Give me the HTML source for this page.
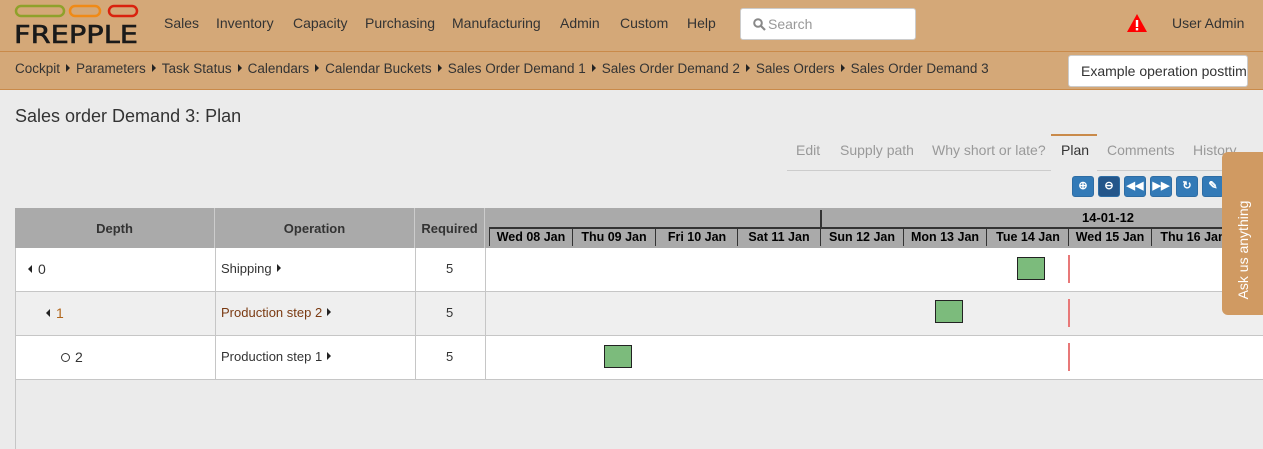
<!DOCTYPE html>
<html><head><meta charset="utf-8"><style>
*{box-sizing:border-box;margin:0;padding:0}
body{width:1263px;height:449px;overflow:hidden;background:#ebebeb;font-family:"Liberation Sans",sans-serif;color:#333;position:relative;font-size:14px}
.a{position:absolute;white-space:nowrap}
#nav{left:0;top:0;width:1263px;height:52px;background:#d4a878;border-bottom:1px solid #c98a4a}
#bc{left:0;top:52px;width:1263px;height:38px;background:#d4a878;border-bottom:1px solid #c98a4a}
.nl{top:15px;font-size:14px;color:#333}
.tri{display:inline-block;width:0;height:0;border-top:4px solid transparent;border-bottom:4px solid transparent;border-left:4px solid #222;margin:0 6px 0 6px;vertical-align:1px}
.tril{display:inline-block;width:0;height:0;border-top:4px solid transparent;border-bottom:4px solid transparent;border-right:4px solid #222;margin-right:6px;vertical-align:1px}
.tab{top:142px;font-size:14px;color:#999}
.btn{top:176px;width:22px;height:21px;background:#337ab7;border-radius:3px;border:1px solid #2e6da4;color:#fff;font-size:11px;text-align:center;line-height:19px;font-weight:bold}
.hd{top:208px;height:40px;background:#aaa;border-right:1px solid #ccc;font-weight:bold;font-size:13px;text-align:center;line-height:42px;color:#333}
.row{left:15px;width:1248px;height:44px;border-bottom:1px solid #c6c6c6}
.day{top:228px;height:18px;border-left:1.5px solid #333;font-weight:bold;font-size:12.5px;color:#000;line-height:18px;text-align:center;width:83px}
.bar{width:28px;height:23px;background:#7cbb7c;border:1px solid #222}
.red{left:1068px;width:2px;height:28px;background:#e87878}
</style></head><body>
<div class="a" id="nav"></div>
<div class="a" id="bc"></div>
<svg class="a" style="left:14px;top:4px" width="126" height="42">
<rect x="2" y="2" width="48" height="10" rx="5" fill="none" stroke="#8fa12b" stroke-width="2.5"/>
<rect x="56" y="2" width="30" height="10" rx="5" fill="none" stroke="#f08a16" stroke-width="2.5"/>
<rect x="95" y="2" width="28" height="10" rx="5" fill="none" stroke="#d9220e" stroke-width="2.5"/>
<text x="0" y="39" font-family="DejaVu Sans" font-size="25" fill="#1a1a1a" textLength="124" lengthAdjust="spacingAndGlyphs" stroke="#1a1a1a" stroke-width="0.6">FREPPLE</text>
</svg>
<div class="a nl" style="left:164px">Sales</div>
<div class="a nl" style="left:216px">Inventory</div>
<div class="a nl" style="left:293px">Capacity</div>
<div class="a nl" style="left:365px">Purchasing</div>
<div class="a nl" style="left:452px">Manufacturing</div>
<div class="a nl" style="left:560px">Admin</div>
<div class="a nl" style="left:620px">Custom</div>
<div class="a nl" style="left:687px">Help</div>
<div class="a" style="left:740px;top:8px;width:176px;height:32px;background:#fff;border:1px solid #ccc;border-radius:3px;color:#999;font-size:14px;line-height:30px;padding-left:27px">Search
<svg class="a" style="left:12px;top:9px" width="13" height="13"><circle cx="5" cy="5" r="3.8" fill="none" stroke="#888" stroke-width="2"/><line x1="8" y1="8" x2="12" y2="12" stroke="#888" stroke-width="2.2"/></svg></div>
<svg class="a" style="left:1126px;top:13px" width="22" height="20"><path d="M11 1 L21 19 L1 19 Z" fill="#f00"/><rect x="9.8" y="7" width="2.4" height="7" fill="#fff"/><rect x="9.8" y="15" width="2.4" height="2.4" fill="#fff"/></svg>
<div class="a nl" style="left:1172px">User Admin</div>
<div class="a" style="left:15px;top:61px;font-size:13.5px">Cockpit<span class="tri"></span>Parameters<span class="tri"></span>Task Status<span class="tri"></span>Calendars<span class="tri"></span>Calendar Buckets<span class="tri"></span>Sales Order Demand 1<span class="tri"></span>Sales Order Demand 2<span class="tri"></span>Sales Orders<span class="tri"></span>Sales Order Demand 3</div>
<div class="a" style="left:1068px;top:55px;width:180px;height:32px;background:#fff;border:1px solid #ccc;border-radius:3px;overflow:hidden;font-size:14px;line-height:30px;padding-left:12px">Example operation posttime</div>
<div class="a" style="left:15px;top:106px;font-size:18px;color:#333">Sales order Demand 3: Plan</div>
<div class="a" style="left:787px;top:170px;width:450px;height:1px;background:#ccc"></div>
<div class="a tab" style="left:796px">Edit</div>
<div class="a tab" style="left:840px">Supply path</div>
<div class="a tab" style="left:932px">Why short or late?</div>
<div class="a" style="left:1051px;top:134px;width:46px;height:37px;border-top:2px solid #c98a4a;background:#ebebeb"></div>
<div class="a tab" style="left:1061px;color:#333">Plan</div>
<div class="a tab" style="left:1107px">Comments</div>
<div class="a tab" style="left:1193px">History</div>
<div class="a btn" style="left:1072px">⊕</div>
<div class="a btn" style="left:1098px;background:#24568a">⊖</div>
<div class="a btn" style="left:1124px">◀◀</div>
<div class="a btn" style="left:1150px">▶▶</div>
<div class="a btn" style="left:1176px">↻</div>
<div class="a btn" style="left:1202px">✎</div>
<div class="a" style="left:15px;top:208px;width:1248px;height:241px;background:#ebebeb;border-left:1px solid #c6c6c6"></div>
<div class="a hd" style="left:15px;width:200px">Depth</div>
<div class="a hd" style="left:215px;width:200px">Operation</div>
<div class="a hd" style="left:415px;width:70px">Required</div>
<div class="a hd" style="left:485px;width:778px"></div>
<div class="a" style="left:820px;top:210px;width:1.5px;height:18px;background:#333"></div>
<div class="a" style="left:1082px;top:210px;font-weight:bold;font-size:13px;color:#000">14-01-12</div>
<div class="a" style="left:489px;top:227px;width:774px;height:1.5px;background:#333"></div>
<div class="a day" style="left:489px">Wed 08 Jan</div>
<div class="a day" style="left:572px">Thu 09 Jan</div>
<div class="a day" style="left:655px">Fri 10 Jan</div>
<div class="a day" style="left:737px">Sat 11 Jan</div>
<div class="a day" style="left:820px">Sun 12 Jan</div>
<div class="a day" style="left:903px">Mon 13 Jan</div>
<div class="a day" style="left:986px">Tue 14 Jan</div>
<div class="a day" style="left:1068px">Wed 15 Jan</div>
<div class="a day" style="left:1151px">Thu 16 Jan</div>
<div class="a day" style="left:1234px"></div>
<div class="a row" style="top:248px;background:#fff;border-left:1px solid #c6c6c6"></div>
<div class="a row" style="top:292px;background:#efefef;border-left:1px solid #c6c6c6"></div>
<div class="a row" style="top:336px;background:#fff;border-left:1px solid #c6c6c6"></div>
<div class="a" style="left:215px;top:248px;width:1px;height:132px;background:#c6c6c6"></div>
<div class="a" style="left:415px;top:248px;width:1px;height:132px;background:#c6c6c6"></div>
<div class="a" style="left:485px;top:248px;width:1px;height:132px;background:#c6c6c6"></div>
<div class="a" style="left:28px;top:261px;font-size:14px"><span class="tril"></span>0</div>
<div class="a" style="left:46px;top:305px;font-size:14px;color:#b0651b"><span class="tril"></span>1</div>
<div class="a" style="left:61px;top:349px;font-size:14px"><span style="display:inline-block;width:9px;height:9px;border:1px solid #333;border-radius:50%;margin-right:5px"></span>2</div>
<div class="a" style="left:221px;top:261px;font-size:13px">Shipping<span class="tri" style="margin-left:5px"></span></div>
<div class="a" style="left:221px;top:305px;font-size:13px;color:#7a3a12">Production step 2<span class="tri" style="margin-left:5px"></span></div>
<div class="a" style="left:221px;top:349px;font-size:13px">Production step 1<span class="tri" style="margin-left:5px"></span></div>
<div class="a" style="left:446px;top:261px;font-size:13px">5</div>
<div class="a" style="left:446px;top:305px;font-size:13px">5</div>
<div class="a" style="left:446px;top:349px;font-size:13px">5</div>
<div class="a bar" style="left:1017px;top:257px"></div>
<div class="a bar" style="left:935px;top:300px"></div>
<div class="a bar" style="left:604px;top:345px"></div>
<div class="a red" style="top:255px"></div>
<div class="a red" style="top:299px"></div>
<div class="a red" style="top:343px"></div>
<div class="a" style="left:1222px;top:152px;width:45px;height:163px;background:#d09a62;border-radius:6px 0 0 6px"></div>
<div class="a" style="left:1243px;top:250px;transform:translate(-50%,-50%) rotate(-90deg);color:#fff;font-size:14px">Ask us anything</div>
</body></html>
